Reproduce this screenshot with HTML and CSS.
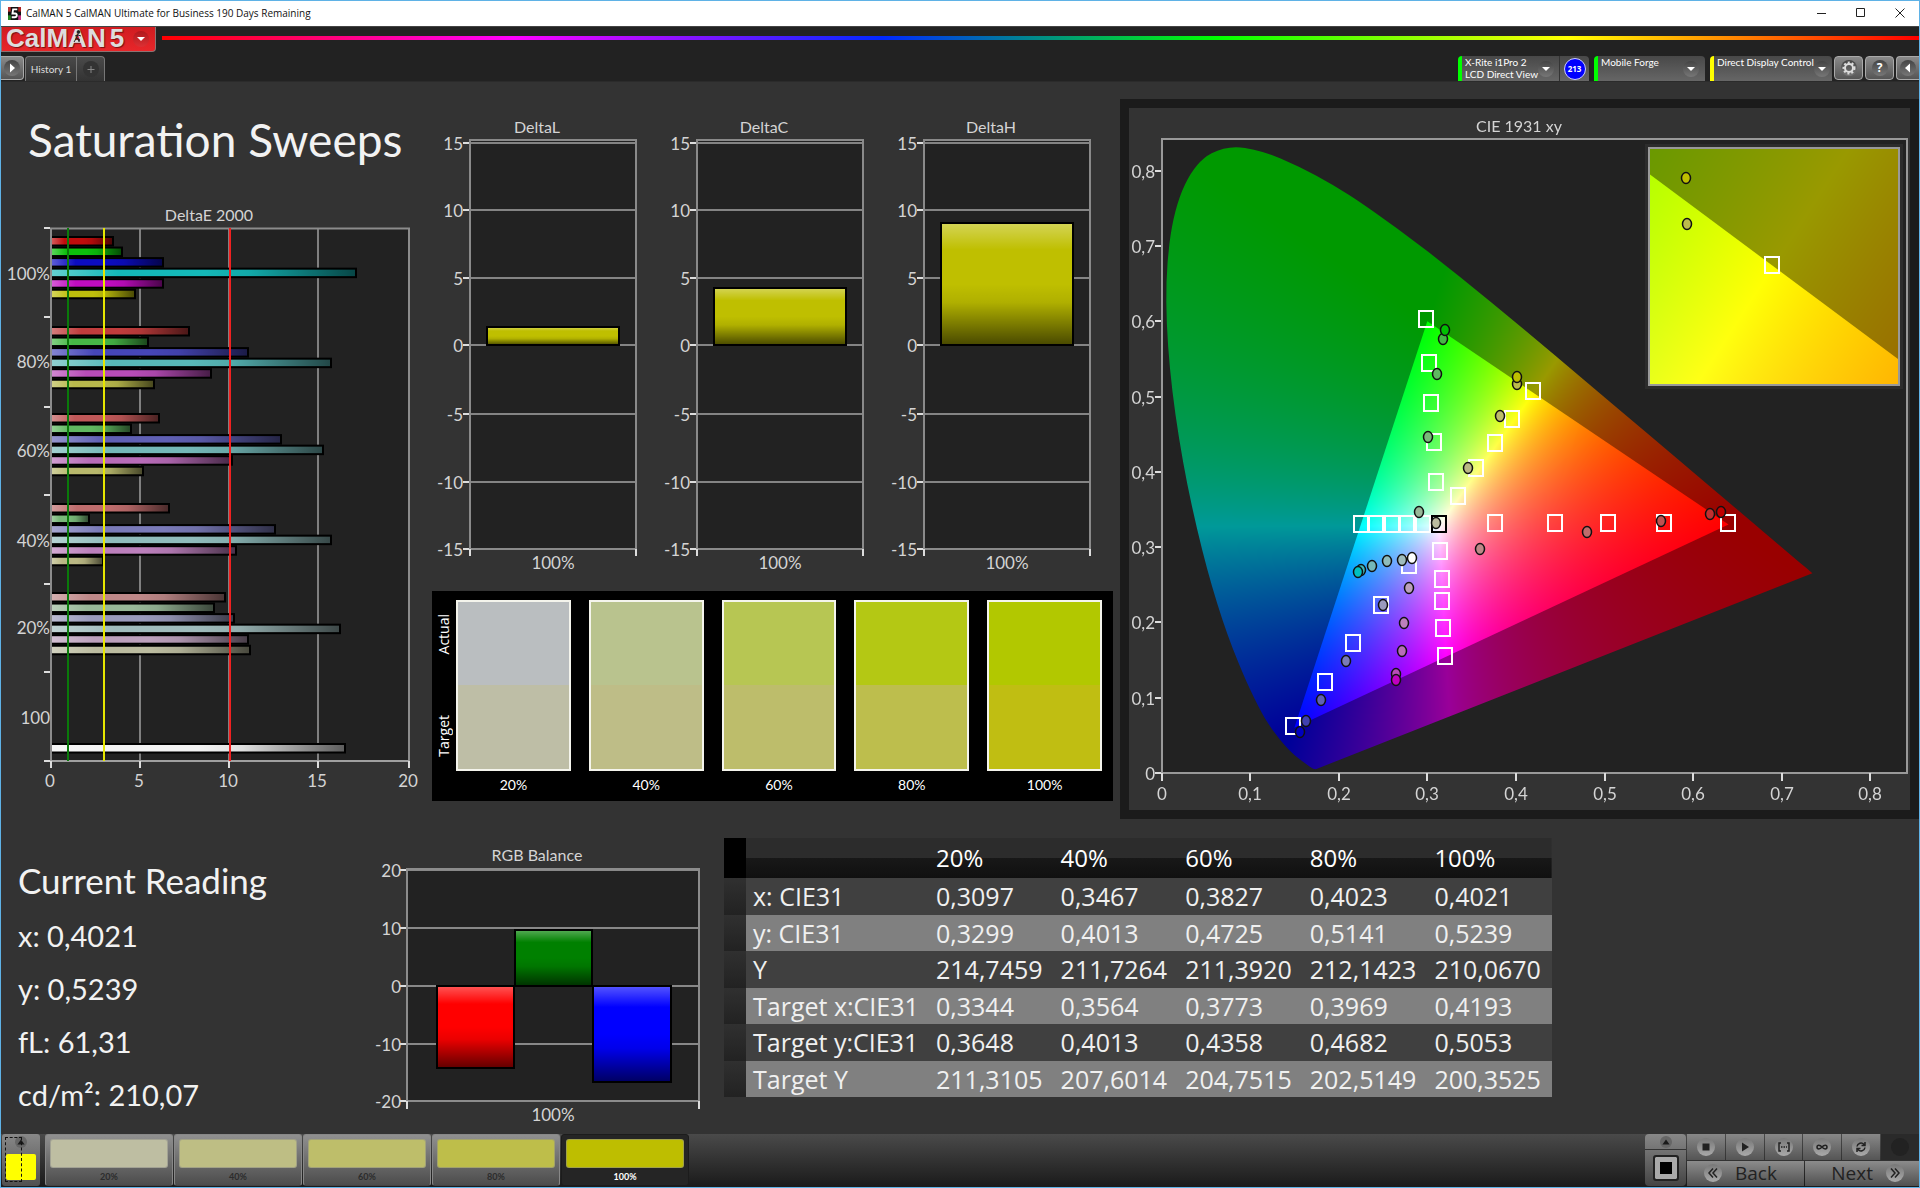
FILE: index.html
```html
<!DOCTYPE html>
<html lang="en">
<head>
<meta charset="utf-8">
<title>CalMAN 5 CalMAN Ultimate for Business</title>
<link rel="stylesheet" href="styles.css">
</head>
<body>
<div class="window">
  <header class="titlebar">
    <svg class="app-icon" viewBox="0 0 14 14" aria-hidden="true">
      <rect width="14" height="14" fill="#111"/>
      <path d="M0 0h3v5H0z" fill="#b33"/><path d="M11 0h3v5h-3z" fill="#a22"/><path d="M0 9h3v5H0z" fill="#282"/><path d="M11 9h3v5h-3z" fill="#c38"/>
      <path d="M10 2.500H5.500L4.800 7h3c2.500 0 2.200 4-.500 4H4" fill="none" stroke="#fff" stroke-width="2"/>
    </svg>
    <span class="titlebar-text">CalMAN 5 CalMAN Ultimate for Business 190 Days Remaining</span>
    <button class="win-btn" aria-label="Minimize"><svg viewBox="0 0 12 12"><path d="M1 6.500h9" /></svg></button>
    <button class="win-btn" aria-label="Maximize"><svg viewBox="0 0 12 12"><path d="M1.500 1.500h8v8h-8z"/></svg></button>
    <button class="win-btn" aria-label="Close"><svg viewBox="0 0 12 12"><path d="M1.500 1.500l9 9M10.500 1.500l-9 9"/></svg></button>
  </header>

  <div class="brandbar">
    <button class="logo">
      <span class="logo-text">CalMAN<span class="logo-five">5</span></span>
      <svg class="climber" viewBox="0 0 10 14" aria-hidden="true"><circle cx="5.500" cy="2" r="1.400"/><path d="M5 4L3.500 8M5 5l3 1M5 5L2 6M3.500 8l3 1.500L6 12M3.500 8L1 12"/></svg>
      <span class="knob knob-red"><svg viewBox="0 0 16 16"><path d="M4 6h8l-4 4z"/></svg></span>
    </button>
    <div class="spectrum"></div>
  </div>

  <nav class="toolbar">
    <button class="tool tool-play" aria-label="Open workflow"><span class="knob"><svg viewBox="0 0 16 16"><path d="M6 3.500v9L11 8z"/></svg></span></button>
    <div class="tabs">
      <button class="tab">History 1</button>
      <button class="tab tab-add" aria-label="Add history"><span class="knob knob-dark"><svg class="dim" viewBox="0 0 16 16"><path d="M7.500 5h1v3h3v1h-3v3h-1V9h-3V8h3z"/></svg></span></button>
    </div>
    <div class="devices">
      <div class="device device-meter">
        <button class="device-main"><span class="device-name">X-Rite i1Pro 2<br>LCD Direct View</span><span class="knob"><svg viewBox="0 0 16 16"><path d="M4 6h8l-4 4z"/></svg></span></button>
        <button class="device-count"><span class="count">213</span></button>
      </div>
      <button class="device device-source"><span class="device-name">Mobile Forge</span><span class="knob"><svg viewBox="0 0 16 16"><path d="M4 6h8l-4 4z"/></svg></span></button>
      <button class="device device-display"><span class="device-name">Direct Display Control</span><span class="knob"><svg viewBox="0 0 16 16"><path d="M4 6h8l-4 4z"/></svg></span></button>
      <div class="tool-set">
        <button class="tool" aria-label="Settings"><span class="knob"><svg class="gear" viewBox="0 0 16 16"><circle cx="8" cy="8" r="4"/><circle class="teeth" cx="8" cy="8" r="5.500"/></svg></span></button>
        <button class="tool" aria-label="Help"><span class="knob knob-text">?</span></button>
        <button class="tool tool-edge" aria-label="Collapse"><span class="knob"><svg viewBox="0 0 16 16"><path d="M10 3.500v9L5 8z"/></svg></span></button>
      </div>
    </div>
  </nav>

  <main class="content">
    <section class="sweeps">
      <div class="sweep-left">
        <h1>Saturation Sweeps</h1>
        <svg class="chart" id="deltaE" viewBox="1 200 431 600" role="img" aria-label="DeltaE 2000"></svg>
      </div>
      <div class="sweep-middle">
        <div class="deltas">
          <svg class="chart" id="deltaL" viewBox="432 110 227 471" role="img" aria-label="DeltaL"></svg>
          <svg class="chart" id="deltaC" viewBox="432 110 227 471" role="img" aria-label="DeltaC"></svg>
          <svg class="chart" id="deltaH" viewBox="432 110 227 471" role="img" aria-label="DeltaH"></svg>
        </div>
        <div class="swatches">
          <div class="swatch-side"><span>Actual</span><span>Target</span></div>
          <div class="swatch"><div class="pair pair-20"></div><span>20%</span></div>
          <div class="swatch"><div class="pair pair-40"></div><span>40%</span></div>
          <div class="swatch"><div class="pair pair-60"></div><span>60%</span></div>
          <div class="swatch"><div class="pair pair-80"></div><span>80%</span></div>
          <div class="swatch"><div class="pair pair-100"></div><span>100%</span></div>
        </div>
      </div>
      <div class="cie-panel">
        <div class="cie">
          <canvas id="gamut" width="781" height="702"></canvas>
          <svg class="chart" id="cie" viewBox="1129 108 781 702" role="img" aria-label="CIE 1931 xy"></svg>
        </div>
      </div>
    </section>

    <section class="results">
      <div class="reading">
        <h2>Current Reading</h2>
        <p>x: 0,4021</p>
        <p>y: 0,5239</p>
        <p>fL: 61,31</p>
        <p>cd/m²: 210,07</p>
      </div>
      <svg class="chart" id="rgb" viewBox="370 838 354 290" role="img" aria-label="RGB Balance"></svg>
      <table class="data">
        <thead>
          <tr><th class="grip"></th><th class="name"></th><th scope="col">20%</th><th scope="col">40%</th><th scope="col">60%</th><th scope="col">80%</th><th scope="col">100%</th></tr>
        </thead>
        <tbody>
          <tr><td class="grip"></td><th scope="row">x: CIE31</th><td>0,3097</td><td>0,3467</td><td>0,3827</td><td>0,4023</td><td>0,4021</td></tr>
          <tr><td class="grip"></td><th scope="row">y: CIE31</th><td>0,3299</td><td>0,4013</td><td>0,4725</td><td>0,5141</td><td>0,5239</td></tr>
          <tr><td class="grip"></td><th scope="row">Y</th><td>214,7459</td><td>211,7264</td><td>211,3920</td><td>212,1423</td><td>210,0670</td></tr>
          <tr><td class="grip"></td><th scope="row">Target x:CIE31</th><td>0,3344</td><td>0,3564</td><td>0,3773</td><td>0,3969</td><td>0,4193</td></tr>
          <tr><td class="grip"></td><th scope="row">Target y:CIE31</th><td>0,3648</td><td>0,4013</td><td>0,4358</td><td>0,4682</td><td>0,5053</td></tr>
          <tr><td class="grip"></td><th scope="row">Target Y</th><td>211,3105</td><td>207,6014</td><td>204,7515</td><td>202,5149</td><td>200,3525</td></tr>
        </tbody>
      </table>
    </section>
  </main>

  <footer class="bottombar">
    <button class="level" aria-label="Pattern level"><span class="mini-knob"><svg viewBox="0 0 10 10"><path d="M5 3l3 4H2z"/></svg></span><span class="level-color"></span><span class="level-focus"></span></button>
    <div class="steps">
      <button class="step"><span class="step-color c20"></span>20%</button>
      <button class="step"><span class="step-color c40"></span>40%</button>
      <button class="step"><span class="step-color c60"></span>60%</button>
      <button class="step"><span class="step-color c80"></span>80%</button>
      <button class="step step-active"><span class="step-color c100"></span>100%</button>
    </div>
    <div class="transport">
      <div class="pattern">
        <button class="pattern-up" aria-label="Pattern options"><span class="mini-knob"><svg viewBox="0 0 10 10"><path d="M5 3l3 4H2z"/></svg></span></button>
        <button class="pattern-window" aria-label="Pattern window"><span class="pattern-icon"></span></button>
      </div>
      <div class="controls">
        <div class="control-row">
          <button class="ctl" aria-label="Stop"><span class="disc"><svg viewBox="0 0 18 18"><path d="M5.500 5.500h7v7h-7z"/></svg></span></button>
          <button class="ctl" aria-label="Play"><span class="disc"><svg viewBox="0 0 18 18"><path d="M6 4.500v9l7-4.500z"/></svg></span></button>
          <button class="ctl" aria-label="Range"><span class="disc"><svg class="line" viewBox="0 0 18 18"><path d="M6 5H4v8h2M12 5h2v8h-2M6 9h1.500M8.500 9H10M11 9h1"/></svg></span></button>
          <button class="ctl" aria-label="Loop"><span class="disc"><svg class="line" viewBox="0 0 18 18"><path d="M9 9C7 6.500 4 6.500 4 9s3 2.500 5 0 5-2.500 5 0-3 2.500-5 0z"/></svg></span></button>
          <button class="ctl" aria-label="Refresh"><span class="disc"><svg class="line" viewBox="0 0 18 18"><path d="M5 8.500a4 4 0 0 1 7-2M13 9.500a4 4 0 0 1-7 2M13 4v3.500h-3.500M5 14v-3.500h3.500"/></svg></span></button>
          <button class="ctl ctl-off" aria-label="Record"><span class="disc"></span></button>
        </div>
        <div class="control-row">
          <button class="nav"><span class="disc"><svg class="line" viewBox="0 0 18 18"><path d="M9 4.500L5 9l4 4.500M13 4.500L9 9l4 4.500"/></svg></span>Back</button>
          <button class="nav nav-next">Next<span class="disc"><svg class="line" viewBox="0 0 18 18"><path d="M5 4.500L9 9l-4 4.500M9 4.500L13 9l-4 4.500"/></svg></span></button>
        </div>
      </div>
    </div>
  </footer>
</div>
<script src="script.js"></script>
</body>
</html>
```

FILE: styles.css
```css
* { box-sizing: border-box; }
body { margin: 0; background: #333; color: #eee; font-family: "Open Sans", sans-serif; }
button { margin: 0; padding: 0; border: 0; background: none; color: inherit; font: inherit; }
.window { min-height: 100vh; display: flex; flex-direction: column; border: 1px solid #5fb2e6; }

/* title bar */
.titlebar { height: 25px; display: flex; align-items: center; background: #fff; color: #111; padding: 0 0 1px 7px; }
.app-icon { width: 13px; height: 13px; margin-right: 5px; }
.titlebar-text { flex: 1; font-size: 10px; line-height: 16px; }
.win-btn { width: 39px; height: 24px; display: flex; align-items: center; justify-content: center; }
.win-btn svg { width: 12px; height: 12px; fill: none; stroke: #222; stroke-width: 1; }

/* brand bar */
.brandbar { display: flex; background: #222; border-top: 1px solid #444; height: 30px; }
.logo { position: relative; width: 155px; height: 25px; padding: 0 6px 0 4px; display: flex; align-items: center; justify-content: space-between; background: linear-gradient(#d01c20, #e8262a); border: 1px solid #8d7373; border-top: 0; border-radius: 0 0 4px 0; }
.logo-text { font: bold 26px/20px "Liberation Sans", Arial, sans-serif; color: #ddd; text-shadow: 1px 1px 1px #711; white-space: nowrap; padding-bottom: 3px; }
.logo-five { margin-left: 4px; }
.climber { position: absolute; left: 71px; top: 3px; width: 10px; height: 14px; fill: #222; stroke: #222; stroke-width: 1; }
.knob { flex: none; width: 16px; height: 16px; border-radius: 50%; background: linear-gradient(#444, #777); display: flex; align-items: center; justify-content: center; }
.knob svg { width: 16px; height: 16px; fill: #fff; }
.knob-red { background: linear-gradient(#b0181c, #dc3034); }
.knob-dark { background: #333; }
.knob svg.dim { fill: #888; }
.knob-text { font: bold 12px/16px "Open Sans", sans-serif; color: #fff; }
.knob svg.gear { fill: none; stroke: #ddd; stroke-width: 2; }
.gear .teeth { stroke-dasharray: 2 2; stroke-width: 2; }
.spectrum { flex: 1; height: 4px; margin: 9px 0 0 6px; background: linear-gradient(90deg, #f00, #f0f 20%, #0028ff 41%, #0f0 60%, #ff0 80%, #f00); }

/* toolbar */
.toolbar { display: flex; align-items: flex-start; height: 26px; background: #222; border-bottom: 1px solid #2b2b2b; }
.tool { width: 29px; height: 24px; display: flex; align-items: center; justify-content: center; border: 1px solid #aaa; border-radius: 4px; background: linear-gradient(#8a8a8a, #555); }
.tool-play { width: 23px; border-left: 0; border-radius: 0 4px 4px 0; }
.tool-edge { width: 23px; border-right: 0; border-radius: 4px 0 0 4px; }
.tabs { display: flex; margin-left: 1px; height: 25px; border: 1px solid #777; border-bottom: 0; border-radius: 4px 4px 0 0; background: linear-gradient(#4a4a4a, #333); }
.tab { width: 50px; font: 10px/24px Lato, sans-serif; color: #ddd; white-space: nowrap; }
.tab-add { width: 28px; border-left: 1px solid #777; display: flex; align-items: center; justify-content: center; }
.devices { margin-left: auto; display: flex; gap: 5px; }
.device { height: 25px; display: flex; align-items: stretch; justify-content: space-between; border-left: 4px solid #0f0; border-radius: 4px 4px 0 0; background: linear-gradient(#484848, #666); font: 10px/12px Lato, sans-serif; color: #fff; text-align: left; white-space: nowrap; }
.device .knob { align-self: center; }
.device-name { padding-left: 3px; }
.device-main { width: 97px; display: flex; justify-content: space-between; padding-right: 8px; text-align: left; }
.device-count { width: 30px; border-left: 1px solid #333; display: flex; align-items: center; justify-content: center; }
.count { width: 22px; height: 22px; border: 1px solid #ccf; border-radius: 50%; background: #00f; font: bold 8px/20px "Open Sans", sans-serif; text-align: center; }
.device-source { width: 111px; padding-right: 6px; }
.device-display { width: 122px; padding-right: 5px; border-left-color: #ff0; }
.tool-set { display: flex; gap: 2px; margin-left: -3px; }

/* content */
.content { flex: 1; background: #333; }
.sweeps { display: grid; grid-template-columns: 431fr 681fr 806fr; }
.chart { display: block; width: 100%; height: auto; font-family: Lato, "Open Sans", sans-serif; }
.chart text { font-size: 17px; fill: #d4d4d4; }
.chart .chart-title { font-size: 16px; }
h1, h2, p { margin: 0; font-family: Lato, "Open Sans", sans-serif; font-weight: 400; color: #f2f2f2; }
h1 { padding: 28px 0 30px 27px; font-size: 46px; line-height: 60px; white-space: nowrap; }
.deltas { display: grid; grid-template-columns: 1fr 1fr 1fr; padding-top: 28px; }
.swatches { margin-top: 10px; height: 210px; display: flex; gap: 18px; padding: 9px 11px 0 0; background: #000; }
.swatch-side { width: 24px; margin-right: -18px; padding: 14px 0; height: 171px; display: flex; flex-direction: column; justify-content: space-between; align-items: center; font-size: 14px; line-height: 20px; color: #fff; }
.swatch-side span { writing-mode: vertical-rl; transform: rotate(180deg); }
.swatch { flex: 1; text-align: center; font: 14px/28px Lato, sans-serif; color: #fff; }
.pair { height: 171px; border: 2px solid #f4f4ec; }
.pair-20 { background: linear-gradient(#babec0 50%, #bebea6 50%); }
.pair-40 { background: linear-gradient(#b9c38e 50%, #bebd87 50%); }
.pair-60 { background: linear-gradient(#b7c653 50%, #bdbd6b 50%); }
.pair-80 { background: linear-gradient(#b4c814 50%, #bdbe4d 50%); }
.pair-100 { background: linear-gradient(#b2c800 50%, #c0be12 50%); }
.cie-panel { margin: 17px 0 0 7px; border: 9px solid #1b1b1b; background: #333; align-self: start; }
.cie { position: relative; }
#gamut { position: absolute; inset: 0; width: 100%; height: 100%; }
#cie { position: relative; }

/* results */
.results { display: grid; grid-template-columns: 369fr 354fr 828fr 367fr; align-items: start; padding-top: 19px; }
.reading { padding: 13px 0 0 17px; white-space: nowrap; }
.reading h2 { font-size: 35px; line-height: 58px; }
.reading p { font-size: 29px; line-height: 52px; padding-top: 1px; }
.data { width: 100%; height: 259px; border-collapse: collapse; table-layout: fixed; font-size: 25px; color: #f0f0f0; }
.data th, .data td { padding: 0 0 0 7px; font-weight: 400; text-align: left; line-height: 30px; white-space: nowrap; }
.data thead tr { height: 40px; background: linear-gradient(#2c2c2c 50%, #181818 50%, #101010); }
.data thead th { font-size: 24px; color: #fff; }
.data tbody tr { height: 36px; background: #404040; }
.data tbody tr:nth-child(even) { background: #808080; }
.data .grip { width: 22px; padding: 0; background: linear-gradient(#303030, #222); }
.data thead .grip { background: #000; }
.data .name { width: 183px; }

/* bottom bar */
.bottombar { height: 53px; display: flex; background: linear-gradient(#4a4a4a, #1a1a1a); }
.level { position: relative; width: 38px; margin: 0 5px 1px 1px; padding: 2px 4px 6px; display: flex; flex-direction: column; align-items: center; justify-content: space-between; border-radius: 3px; background: linear-gradient(#888, #505050); }
.mini-knob { width: 12px; height: 12px; border-radius: 50%; background: #666; display: flex; }
.mini-knob svg { width: 12px; height: 12px; fill: #1a1a1a; }
.level-color { width: 30px; height: 26px; border-radius: 2px; background: #ff0; }
.level-focus { position: absolute; left: 3px; top: 3px; width: 17px; height: 45px; border: 1px dashed #111; }
.steps { display: flex; gap: 1px; }
.step { width: 128px; margin-bottom: 1px; padding: 4px 4px 0; display: flex; flex-direction: column; border: 1px solid #888; border-bottom-color: #444; border-radius: 3px; background: linear-gradient(#909090, #4c4c4c); font: bold 9px/16px Lato, sans-serif; color: #2c2c2c; text-align: center; align-items: center; }
.step-color { width: 100%; height: 31px; margin-bottom: 1px; border-radius: 3px; border: 1px solid #8888; }
.step-active { background: #252525; border-color: #1c1c1c; color: #fff; }
.c20 { background: #bebea2; }
.c40 { background: #bebe84; }
.c60 { background: #bebe6a; }
.c80 { background: #bebe4a; }
.c100 { background: #bebe00; }
.transport { margin: 0 0 1px auto; display: flex; gap: 1px; }
.pattern { width: 41px; display: flex; flex-direction: column; border-radius: 4px; background: linear-gradient(#888, #444); }
.pattern-up { height: 16px; display: flex; align-items: center; justify-content: center; border-bottom: 1px solid #333; }
.pattern-window { flex: 1; display: flex; align-items: center; justify-content: center; }
.pattern-icon { width: 26px; height: 26px; border: 2px solid #222; border-radius: 3px; background: #000; box-shadow: inset 0 0 0 5px #aaa; }
.controls { width: 232px; display: flex; flex-direction: column; gap: 1px; }
.control-row { flex: 1; display: flex; gap: 1px; }
.ctl { flex: 1; display: flex; align-items: center; justify-content: center; background: linear-gradient(#888, #555); }
.ctl-off { background: #2a2a2a; }
.disc { width: 18px; height: 18px; border-radius: 50%; background: linear-gradient(#777, #aaa); display: flex; }
.ctl-off .disc { background: #222; }
.disc svg { width: 18px; height: 18px; fill: #222; }
.disc svg.line { fill: none; stroke: #222; stroke-width: 1.5; }
.nav { flex: 1; display: flex; align-items: center; gap: 13px; padding-left: 17px; background: linear-gradient(#8c8c8c, #505050); font-size: 19px; line-height: 24px; color: #222; }
.nav-next { padding: 0 15px 0 0; justify-content: flex-end; }
```

FILE: script.js
```js
const NS = 'http://www.w3.org/2000/svg';

function el(parent, name, attrs, text) {
  const node = document.createElementNS(NS, name);
  for (const key in attrs) node.setAttribute(key, attrs[key]);
  if (text !== undefined) node.textContent = text;
  parent.appendChild(node);
  return node;
}
function line(svg, x1, y1, x2, y2, color = '#808080', width = 2) {
  el(svg, 'line', { x1, y1, x2, y2, stroke: color, 'stroke-width': width });
}
function label(svg, x, cy, text, anchor = 'middle') {
  el(svg, 'text', { x, y: cy + 6, 'text-anchor': anchor }, text);
}
function title(svg, x, cy, text) {
  el(svg, 'text', { x, y: cy + 6, 'text-anchor': 'middle', class: 'chart-title' }, text);
}
function gloss(svg, id, horizontal) {
  const g = el(el(svg, 'defs', {}), 'linearGradient', { id, x1: 0, y1: 0, x2: horizontal ? 1 : 0, y2: horizontal ? 0 : 1 });
  [[0, '#fff', 0.34], [0.22, '#fff', 0], [0.5, '#000', 0], [0.65, '#000', 0.08], [1, '#000', 0.62]]
    .forEach(([offset, c, o]) => el(g, 'stop', { offset, 'stop-color': c, 'stop-opacity': o }));
}
function bar(svg, x, y, width, height, fill, glossId) {
  el(svg, 'rect', { x, y, width, height, fill });
  el(svg, 'rect', { x, y, width, height, fill: `url(#${glossId})`, stroke: '#000', 'stroke-width': 2 });
}

/* DeltaE 2000: horizontal bars grouped by saturation */
function drawDeltaE() {
  const svg = document.getElementById('deltaE');
  gloss(svg, 'glossE', true);
  title(svg, 209, 215, 'DeltaE 2000');
  el(svg, 'rect', { x: 51, y: 228, width: 358, height: 533, fill: '#222' });
  [140, 229, 318].forEach(x => line(svg, x, 228, x, 761));
  const groups = [
    [241, [113, 122, 163, 356, 163, 135], ['#c00c0c', '#0cc00c', '#0c0cc0', '#14b8b8', '#c00cc0', '#bebe0c']],
    [331, [189, 148, 248, 331, 211, 154], ['#c03c3c', '#46b846', '#4646b8', '#58b8b8', '#b84cb8', '#b8b84c']],
    [418, [159, 131, 281, 323, 232, 143], ['#c05858', '#60b860', '#6060b4', '#74b8b8', '#b86cb8', '#b8b86c']],
    [508, [169, 89, 275, 331, 236, 103], ['#be6c6c', '#78b878', '#7a7ab8', '#90bcbc', '#bc80bc', '#bab884']],
    [597, [225, 214, 234, 340, 248, 250], ['#be8888', '#98b898', '#9a9abc', '#a0bcbc', '#bca0bc', '#bcbca0']]
  ];
  groups.forEach(([top, ends, colors]) => ends.forEach((end, i) =>
    bar(svg, 51, top + i * 10.55 - 4, end - 51, 8.5, colors[i], 'glossE')));
  bar(svg, 51, 744, 294, 8.5, '#f2f2f2', 'glossE');
  el(svg, 'path', { d: 'M51 761V228.500H409V761', fill: 'none', stroke: '#8c8c8c', 'stroke-width': 2 });
  line(svg, 44, 761, 409, 761, '#a0a0a0');
  line(svg, 68, 228, 68, 761, '#0a7a0a');
  line(svg, 104, 228, 104, 761, '#e6e600');
  line(svg, 230, 228, 230, 761, '#f02020');
  [228, 317, 407, 495, 584, 672, 761].forEach(y => line(svg, 44, y, 50, y, '#ddd'));
  ['100%', '80%', '60%', '40%', '20%', '100'].forEach((t, i) => label(svg, 50, [274, 362, 451, 541, 628, 718][i], t, 'end'));
  [51, 140, 229, 318, 409].forEach((x, i) => {
    line(svg, x, 761, x, 768, '#ddd');
    label(svg, x - 1, 781, String(i * 5));
  });
}

/* DeltaL / DeltaC / DeltaH */
function drawDelta(name, top) {
  const svg = document.getElementById(name);
  const glossId = 'gloss-' + name;
  gloss(svg, glossId, false);
  title(svg, 537, 127, 'D' + name.slice(1));
  el(svg, 'rect', { x: 470, y: 140, width: 166, height: 410, fill: '#222' });
  [143, 210, 278, 345, 414, 482, 549].forEach((y, i) => {
    line(svg, 470, y, 636, y, '#848484');
    line(svg, 463, y, 469, y, '#ddd');
    label(svg, 463, y + 1, String(15 - i * 5), 'end');
  });
  el(svg, 'rect', { x: 470, y: 140, width: 166, height: 409, fill: 'none', stroke: '#8a8a8a', 'stroke-width': 2 });
  line(svg, 470, 549, 470, 556, '#ddd');
  line(svg, 636, 549, 636, 556, '#ddd');
  bar(svg, 487, top, 132, 345 - top, '#bfbf00', glossId);
  label(svg, 553, 563, '100%');
}

/* RGB Balance */
function drawRgb() {
  const svg = document.getElementById('rgb');
  gloss(svg, 'glossRgb', false);
  title(svg, 537, 855, 'RGB Balance');
  el(svg, 'rect', { x: 407, y: 869, width: 292, height: 232, fill: '#222' });
  [870, 928, 986, 1044, 1101].forEach((y, i) => {
    line(svg, 407, y, 699, y, '#888');
    line(svg, 400, y, 406, y, '#ddd');
    label(svg, 401, y + 1, String(20 - i * 10), 'end');
  });
  el(svg, 'rect', { x: 407, y: 869, width: 292, height: 232, fill: 'none', stroke: '#8c8c8c', 'stroke-width': 2 });
  line(svg, 407, 1101, 407, 1109, '#ddd');
  line(svg, 699, 1101, 699, 1109, '#ddd');
  bar(svg, 437, 986, 77, 82, '#f00', 'glossRgb');
  bar(svg, 515, 930, 77, 56, '#008000', 'glossRgb');
  bar(svg, 593, 986, 78, 96, '#00f', 'glossRgb');
  label(svg, 553, 1115, '100%');
}

/* Chromaticity diagram: plot geometry shared by the fill and the overlay */
const plot = { x0: 1161.5, y0: 773, kx: 886, ky: 753 };
const inset = { x: 1649, y: 148, w: 250, h: 237, cx: 0.4193, cy: 0.5053, px: 1772.5, py: 265.5, kx: 5010, ky: 4690 };
const locus = [[.1741,.005],[.1714,.0051],[.1644,.0109],[.1566,.0177],[.144,.0297],[.1241,.0578],[.1096,.0868],[.0913,.1327],[.0687,.2007],[.0454,.295],[.0235,.4127],[.0082,.5384],[.0039,.6548],[.0139,.7502],[.0389,.812],[.0743,.8338],[.1142,.8262],[.1547,.8059],[.1929,.7816],[.2296,.7543],[.3016,.6923],[.3731,.6245],[.4441,.5547],[.5125,.4866],[.5752,.4242],[.627,.3725],[.6658,.334],[.6915,.3083],[.719,.2809],[.7347,.2653]];
const primaries = [[.64, .33], [.3, .6], [.15, .06]];

function chromaImage(w, h, toXY, gain) {
  const off = document.createElement('canvas');
  off.width = w; off.height = h;
  const ctx = off.getContext('2d');
  const img = ctx.createImageData(w, h);
  for (let j = 0; j < h; j++) for (let i = 0; i < w; i++) {
    const [x, y] = toXY(i, j);
    if (y <= 0) continue;
    const X = x / y, Z = (1 - x - y) / y;
    const r = Math.max(0, 3.2406 * X - 1.5372 - 0.4986 * Z);
    const g = Math.max(0, -0.9689 * X + 1.8758 + 0.0415 * Z);
    const b = Math.max(0, 0.0557 * X - 0.204 + 1.057 * Z);
    const k = 255 * gain / Math.max(r, g, b);
    img.data.set([r * k, g * k, b * k, 255], (j * w + i) * 4);
  }
  ctx.putImageData(img, 0, 0);
  return off;
}
function clipDraw(ctx, points, image, dx, dy, smooth) {
  ctx.save();
  ctx.beginPath();
  ctx.moveTo(...points[0]);
  for (let i = 1; i < points.length - 1; i++) {
    const [x, y] = points[i], [nx, ny] = points[i + 1];
    if (smooth) ctx.quadraticCurveTo(x, y, (x + nx) / 2, (y + ny) / 2);
    else ctx.lineTo(x, y);
  }
  ctx.lineTo(...points[points.length - 1]);
  ctx.closePath();
  ctx.clip();
  ctx.drawImage(image, dx, dy);
  ctx.restore();
}
function drawGamut() {
  const ctx = document.getElementById('gamut').getContext('2d');
  const ox = 1129, oy = 108;
  ctx.fillStyle = '#222';
  ctx.fillRect(1161 - ox, 138 - oy, 746, 635);
  const main = (i, j) => [(i + ox - plot.x0) / plot.kx, (plot.y0 - j - oy) / plot.ky];
  const toPx = ([x, y]) => [plot.x0 + x * plot.kx - ox, plot.y0 - y * plot.ky - oy];
  clipDraw(ctx, locus.map(toPx), chromaImage(781, 702, main, 0.6), 0, 0, true);
  clipDraw(ctx, primaries.map(toPx), chromaImage(781, 702, main, 1), 0, 0, false);

  const zoomed = (i, j) => [inset.cx + (i + inset.x - inset.px) / inset.kx, inset.cy - (j + inset.y - inset.py) / inset.ky];
  const zoomPx = ([x, y]) => [inset.px + (x - inset.cx) * inset.kx - ox, inset.py - (y - inset.cy) * inset.ky - oy];
  ctx.fillStyle = '#2c2c2c';
  ctx.fillRect(inset.x - 4 - ox, inset.y - 4 - oy, inset.w + 8, inset.h + 8);
  ctx.save();
  ctx.beginPath();
  ctx.rect(inset.x - ox, inset.y - oy, inset.w, inset.h);
  ctx.clip();
  ctx.drawImage(chromaImage(inset.w, inset.h, zoomed, 0.6), inset.x - ox, inset.y - oy);
  clipDraw(ctx, primaries.map(zoomPx), chromaImage(inset.w, inset.h, zoomed, 1), inset.x - ox, inset.y - oy, false);
  ctx.restore();
}

function drawCie() {
  const svg = document.getElementById('cie');
  title(svg, 1519, 126, 'CIE 1931 xy');
  el(svg, 'path', { d: 'M1162 773V139H1907V773', fill: 'none', stroke: '#999', 'stroke-width': 2 });
  line(svg, 1155, 773, 1908, 773, '#999');
  for (let i = 0; i <= 8; i++) {
    const text = i ? '0,' + i : '0';
    const x = Math.round(plot.x0 + i * plot.kx / 10), y = Math.round(plot.y0 - i * plot.ky / 10);
    line(svg, 1155, y, 1161, y, '#ddd');
    label(svg, 1155, y + 1, text, 'end');
    line(svg, x, 773, x, 781, '#ddd');
    label(svg, x, 794, text);
  }
  el(svg, 'rect', { x: inset.x, y: inset.y, width: inset.w, height: inset.h, fill: 'none', stroke: '#999', 'stroke-width': 2 });

  const square = (x, y, stroke = '#fff') =>
    el(svg, 'rect', { x: x - 7, y: y - 8, width: 14, height: 16, fill: 'none', stroke, 'stroke-width': 2 });
  const dot = (x, y, fill) =>
    el(svg, 'ellipse', { cx: x, cy: y, rx: 4.5, ry: 5.5, fill, stroke: '#111', 'stroke-width': 1.5 });

  [[1361,524],[1376,524],[1392,524],[1407,524],[1423,524],
   [1426,319],[1429,363],[1431,403],[1434,442],[1436,482],
   [1533,391],[1512,419],[1495,443],[1476,468],[1458,496],
   [1495,523],[1555,523],[1608,523],[1664,523],[1728,523],
   [1440,551],[1442,579],[1442,601],[1443,628],[1445,656],
   [1409,565],[1381,605],[1353,643],[1325,682],[1293,726],
   [1772,265]].forEach(p => square(...p));
  square(1439, 524, '#000');

  [[1419,512,'#98b898'],[1428,437,'#78b878'],[1437,374,'#60b860'],[1443,339,'#46b846'],[1445,330,'#00c000'],
   [1436,523,'#bcbca0'],[1468,468,'#bab884'],[1500,416,'#bcbc6c'],[1517,384,'#bcbc4c'],[1517,377,'#bfbf00'],
   [1480,549,'#be8888'],[1587,532,'#be6c6c'],[1661,521,'#c05050'],[1710,514,'#c03030'],[1721,512,'#c00000'],
   [1402,560,'#a0bcbc'],[1387,561,'#90bcbc'],[1372,566,'#74b8b8'],[1361,570,'#40b8b8'],[1358,572,'#00c0c0'],
   [1412,558,'#fff'],
   [1409,588,'#bca0bc'],[1404,623,'#bc80bc'],[1402,651,'#b86cb8'],[1396,674,'#b84cb8'],[1396,680,'#c000c0'],
   [1383,605,'#9a9abc'],[1346,661,'#7a7ab8'],[1321,700,'#6060b4'],[1306,721,'#4040b0'],[1300,732,'#0000c0'],
   [1687,224,'#bcbc4c'],[1686,178,'#bfbf00']].forEach(p => dot(...p));
}

drawDeltaE();
drawDelta('deltaL', 327);
drawDelta('deltaC', 288);
drawDelta('deltaH', 223);
drawRgb();
drawGamut();
drawCie();
```
